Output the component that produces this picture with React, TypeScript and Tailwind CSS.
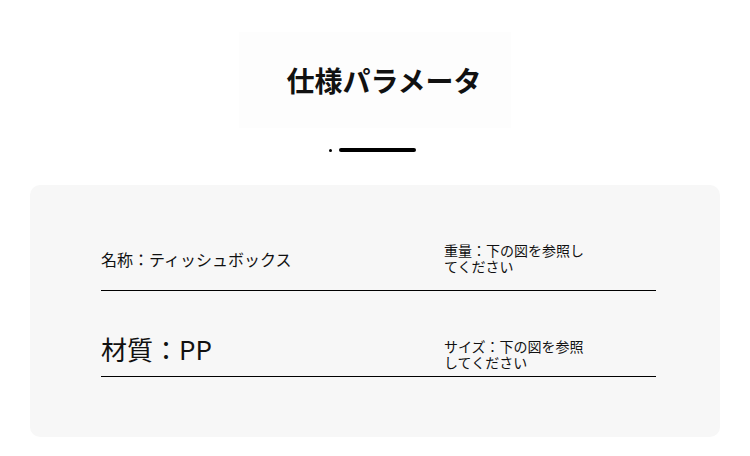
export default function App() {
  return (
    <div
      className="h-[456px] w-[750px] bg-white text-[#111]"
      style={{ fontFamily: '"Noto Sans CJK JP", "Noto Sans", sans-serif' }}
    >
      {/* Heading */}
      <div className="flex justify-center pt-[32px]">
        <div className="flex h-[96px] w-[272px] items-center justify-center bg-[#fdfdfd] pl-[18px]">
          <h1 className="text-[28px] font-bold leading-none">仕様パラメータ</h1>
        </div>
      </div>
      <div className="mt-[20px] flex items-center justify-center gap-[7px] pr-[6px]">
        <span className="h-[3px] w-[3px] rounded-full bg-black" />
        <span className="h-[4px] w-[77px] rounded-full bg-black" />
      </div>

      {/* Spec card */}
      <div className="mx-[30px] mt-[33px] h-[252px] rounded-[10px] bg-[#f7f7f7] pl-[71px] pr-[64px] pt-[45px]">
        <div className="grid h-[61px] grid-cols-[343px_1fr] border-b border-black">
          <div className="self-end pb-[23px] text-[16px] leading-none">名称：ティッシュボックス</div>
          <div className="w-[146px] self-end pb-[16px] text-[14px] leading-[16px]">
            重量：下の図を参照してください
          </div>
        </div>
        <div className="grid h-[86px] grid-cols-[343px_1fr] border-b border-black">
          <div className="self-end pb-[14px] text-[26px] leading-none">材質：PP</div>
          <div className="w-[146px] self-end pb-[6px] text-[14px] leading-[16px]">
            サイズ：下の図を参照してください
          </div>
        </div>
      </div>
    </div>
  );
}
